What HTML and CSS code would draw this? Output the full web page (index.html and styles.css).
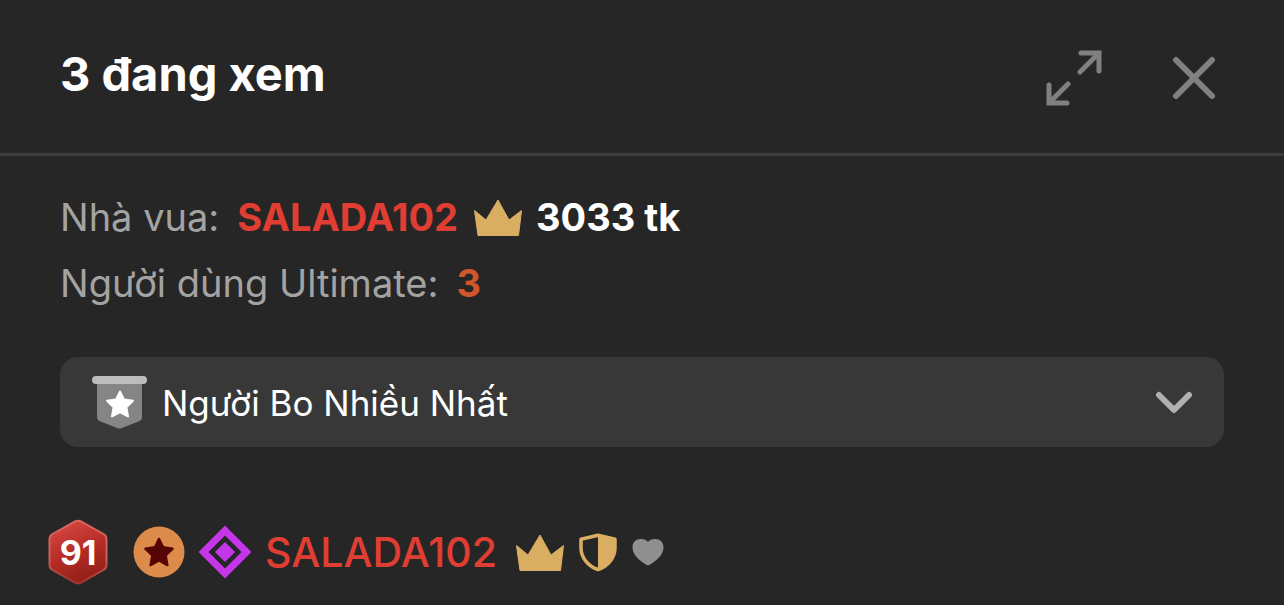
FILE: index.html
```html
<!DOCTYPE html>
<html lang="vi">
<head>
<meta charset="utf-8">
<meta name="viewport" content="width=device-width, initial-scale=1">
<title>3 đang xem</title>
<link rel="stylesheet" href="styles.css">
</head>
<body>
<svg class="defs" aria-hidden="true">
  <symbol id="crown" viewBox="0 0 48 38">
    <path d="M24 2 35 22 47.500 12.500 44.500 37.500H4L.5 12.500 12 22z" fill="#d9ae62" stroke="#d9ae62" stroke-width="1" stroke-linejoin="round"/>
  </symbol>
  <symbol id="star" viewBox="0 0 28 28">
    <path d="M14 2.500l3.600 7.300 8.400 1.200-6.100 6 1.500 8.500-7.400-4-7.400 4 1.500-8.500-6.100-6 8.400-1.200z" fill="currentColor" stroke="currentColor" stroke-width="2" stroke-linejoin="round"/>
  </symbol>
</svg>

<header class="header">
  <h1 class="title">3 đang xem</h1>
  <div class="actions">
    <button class="icon-button" type="button" aria-label="Mở rộng">
      <svg width="58" height="58" viewBox="0 0 58 58" fill="none" stroke="#808080" stroke-width="5" stroke-linecap="round" stroke-linejoin="miter">
        <path d="M35 5h18v18M53 5 34 24M3 37v18h18M3 55l19-19"/>
      </svg>
    </button>
    <button class="icon-button" type="button" aria-label="Đóng">
      <svg width="44" height="44" viewBox="0 0 44 44" fill="none" stroke="#808080" stroke-width="6" stroke-linecap="round">
        <path d="M4 5l36 36M40 5 4 41"/>
      </svg>
    </button>
  </div>
</header>

<main class="content">
  <p class="info"><span>Nhà vua:</span><strong class="king">SALADA102</strong><svg class="info-crown" width="48" height="38" aria-hidden="true"><use href="#crown"/></svg><strong class="tokens">3033 tk</strong></p>
  <p class="info"><span>Người dùng Ultimate:</span><strong class="count">3</strong></p>

  <div class="picker">
    <svg width="56" height="54" viewBox="0 0 56 54" aria-hidden="true">
      <path d="M5 4h45v38q0 3-3 4.200L30 53q-2.500 1-5 0L8 46.200Q5 45 5 42z" fill="#858585"/>
      <rect x="0" y="1" width="55" height="8" rx="4" fill="#bdbdbd"/>
      <use class="white" href="#star" x="13" y="14" width="30" height="30"/>
    </svg>
    <select class="picker-select" aria-label="Danh sách người xem">
      <option>Người Bo Nhiều Nhất</option>
    </select>
    <svg width="36" height="24" viewBox="0 0 36 24" fill="none" stroke="#b0b0b0" stroke-width="6" stroke-linecap="round" stroke-linejoin="round" aria-hidden="true">
      <path d="M3 5l15 15L33 5"/>
    </svg>
  </div>

  <ul class="users">
    <li class="user">
      <span class="level">
        <svg class="level-shape" viewBox="0 0 60 66" aria-hidden="true">
          <defs>
            <linearGradient id="level-fill" x1=".2" y1="0" x2=".6" y2="1">
              <stop offset="0" stop-color="#d84a43"/>
              <stop offset=".5" stop-color="#b82d27"/>
              <stop offset="1" stop-color="#8f1f19"/>
            </linearGradient>
            <linearGradient id="level-edge" x1="0" y1="0" x2="0" y2="1">
              <stop offset="0" stop-color="#dd645d"/>
              <stop offset=".6" stop-color="#c4625e"/>
              <stop offset="1" stop-color="#a5332d"/>
            </linearGradient>
          </defs>
          <path d="M27 2.500q3-1.500 6 0l22.500 12.500q3 1.700 3 5v26q0 3.300-3 5L33 63.500q-3 1.500-6 0L4.500 51q-3-1.700-3-5V20q0-3.300 3-5z" fill="url(#level-fill)" stroke="url(#level-edge)" stroke-width="2"/>
        </svg>
        <span class="level-number">91</span>
      </span>
      <svg class="medal" width="52" height="52" viewBox="0 0 52 52" aria-hidden="true">
        <circle cx="26" cy="26" r="25.500" fill="#dc8b4b"/>
        <use class="maroon" href="#star" x="10" y="10" width="32" height="32"/>
      </svg>
      <svg class="diamond" width="54" height="54" viewBox="0 0 54 54" aria-hidden="true">
        <path d="M27 5.500 48.500 27 27 48.500 5.500 27z" fill="none" stroke="#c535ea" stroke-width="7"/>
        <path d="M27 17 37 27 27 37 17 27z" fill="#c535ea"/>
      </svg>
      <a class="name" href="#">SALADA102</a>
      <span class="badges">
        <svg width="48" height="38" aria-hidden="true"><use href="#crown"/></svg>
        <svg width="40" height="40" viewBox="0 0 40 40" aria-hidden="true">
          <path d="M20 3.200 37 7.200V16c0 9-6.500 18-17 21.500C9.500 34 3 25 3 16V7.200z" fill="none" stroke="#d9ae62" stroke-width="3.500" stroke-linejoin="round"/>
          <path d="M20 3 37 7v9c0 9-6.500 18-17 21.500z" fill="#d9ae62"/>
        </svg>
        <svg width="32" height="28" viewBox="0 0 32 28" aria-hidden="true">
          <path d="M16 27.500C11 25 .5 18.500.5 9.500.5 4 4 1 8.500 1 12 1 15 2 16 4c1-2 4-3 7.500-3C28 1 31.500 4 31.500 9.500c0 9-10.500 15.500-15.500 18z" fill="#8f8f8f"/>
        </svg>
      </span>
    </li>
  </ul>
</main>
</body>
</html>
```

FILE: styles.css
```css
* {
  box-sizing: border-box;
}

body {
  margin: 0;
  background: #262626;
  color: #fff;
  font-family: Inter, "Liberation Sans", sans-serif;
  font-optical-sizing: none;
}

.defs {
  display: none;
}

svg {
  flex: none;
}

.header {
  display: flex;
  align-items: center;
  justify-content: space-between;
  padding: 42px 68px 42px 60px;
  border-bottom: 3px solid #3d3d3d;
}

.title {
  margin: 0;
  padding-bottom: 6px;
  font-size: 47px;
  font-weight: 700;
  line-height: 63px;
}

.actions {
  display: flex;
  align-items: center;
  gap: 68px;
}

.icon-button {
  display: flex;
  padding: 0;
  border: 0;
  background: none;
  cursor: pointer;
}

.content {
  padding: 28px 60px 20px;
}

.info {
  display: flex;
  align-items: center;
  margin: 0;
  color: #a3a3a3;
  font-size: 38px;
  line-height: 66px;
}

.king,
.count {
  margin-left: 18px;
}

.king {
  color: #e03e33;
}

.count {
  color: #d0562b;
}

.info-crown {
  margin: 0 14px 0 16px;
}

.tokens {
  color: #fff;
}

.picker {
  display: flex;
  align-items: center;
  gap: 14px;
  height: 90px;
  margin-top: 41px;
  padding: 0 32px;
  border-radius: 18px;
  background: #383838;
}

.picker-select {
  flex: 1;
  min-width: 0;
  padding: 2px 0 0;
  border: 0;
  appearance: none;
  background: none;
  color: #fff;
  font: 400 35px/54px Inter, "Liberation Sans", sans-serif;
  font-optical-sizing: none;
  cursor: pointer;
}

.white {
  color: #fff;
}

.users {
  margin: 72px -12px 0;
  padding: 0;
  list-style: none;
}

.user {
  display: flex;
  align-items: center;
  height: 66px;
}

.level {
  display: grid;
  place-items: center;
  width: 60px;
  height: 66px;
}

.level-shape,
.level-number {
  grid-area: 1 / 1;
}

.level-shape {
  width: 60px;
  height: 66px;
}

.level-number {
  z-index: 1;
  font-size: 34px;
  font-weight: 700;
}

.medal {
  margin-left: 25px;
}

.maroon {
  color: #560504;
}

.diamond {
  margin-left: 13px;
}

.name {
  margin-left: 13px;
  color: #e03e33;
  font-size: 41px;
  font-weight: 500;
  text-decoration: none;
}

.badges {
  display: flex;
  align-items: center;
  gap: 14px;
  margin-left: 19px;
}
```
